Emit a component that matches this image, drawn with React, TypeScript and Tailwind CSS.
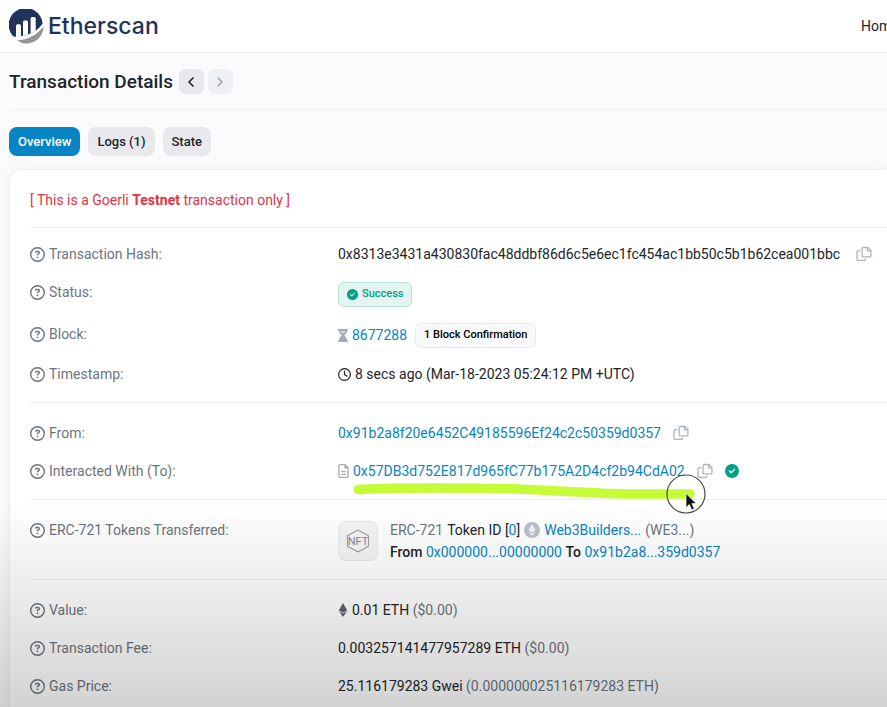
import type { ReactNode } from "react";
import {
  FaRegCircleQuestion,
  FaCircleCheck,
  FaRegClock,
  FaRegFileLines,
  FaEthereum,
} from "react-icons/fa6";
import { ChevronLeft, ChevronRight } from "lucide-react";

function Logo() {
  return (
    <svg className="size-[35px] shrink-0" viewBox="0 0 35 35" aria-hidden="true">
      <path
        d="M3.6 26.8A17 17 0 1 1 33.6 14.5C31 18.6 27.500 21.300 24 23.300C18.500 26.200 11.500 27.600 7.300 27.700Q5 27.900 3.600 26.800Z"
        fill="#21325b"
      />
      <path
        d="M7 16.800Q7 15.300 8.500 15.300H10.600Q12 15.300 12 16.800V27.200Q9.600 27.700 7 28ZM14 13Q14 11.500 15.500 11.500H17.600Q19 11.500 19 13V25.600Q16.800 26.500 14 27.100ZM21.600 9.400Q21.600 7.900 23.100 7.900H25.200Q26.700 7.900 26.700 9.400V21.700Q24.800 23.200 21.600 24.600Z"
        fill="#fff"
      />
      <path d="M8 31.600C18 31 28 26.400 34.500 17.600A17 17 0 0 1 8 31.600Z" fill="#979695" />
    </svg>
  );
}

function CopyButton() {
  return (
    <button type="button" aria-label="Copy" className="shrink-0 text-[#adb5bd]">
      <svg
        className="size-4"
        viewBox="0 0 16 16"
        fill="none"
        stroke="currentColor"
        strokeWidth="1.300"
        strokeLinejoin="round"
      >
        <path d="M7.300 1.500H12l2.900 2.900V9.700a1.200 1.200 0 0 1-1.200 1.200H7.300a1.200 1.200 0 0 1-1.200-1.200V2.700a1.200 1.200 0 0 1 1.200-1.200Z" />
        <path d="M11.500 1.700V4.900h3.200" />
        <path d="M4.300 4.700H2.200A1.200 1.200 0 0 0 1 5.900v7.200a1.200 1.200 0 0 0 1.200 1.200h6.300a1.200 1.200 0 0 0 1.200-1.200v-.5" />
      </svg>
    </button>
  );
}

function Hourglass() {
  return (
    <svg className="h-[13px] w-2.5 shrink-0" viewBox="0 0 10 13" fill="#a5abb1" aria-hidden="true">
      <path d="M0 0h10v1.500H0ZM0 11.500h10V13H0Z" />
      <path d="M1 1h8v1.200C9 4.200 7.200 5.400 6.100 6.500 7.200 7.600 9 8.800 9 10.800V12H1v-1.200C1 8.800 2.800 7.600 3.900 6.500 2.800 5.400 1 4.200 1 2.200Z" />
      <path d="M2.300 2.200h5.400L6.800 4H3.200Z" fill="#d9dcdf" />
    </svg>
  );
}

function NftIcon() {
  return (
    <span className="flex size-10 shrink-0 items-center justify-center rounded-lg border border-[#e6e8ea] bg-[#f4f4f6]">
      <svg className="size-6" viewBox="0 0 24 24" aria-hidden="true">
        <path
          d="M1.500 6.800 12 1l10.500 5.800V17.200L12 23 1.500 17.200Z"
          fill="none"
          stroke="#9a9fa5"
          strokeWidth="1.100"
          strokeLinejoin="round"
        />
        <text
          x="12"
          y="16"
          textAnchor="middle"
          className="fill-[#858a91] font-['Roboto'] text-[11px] font-normal"
        >
          NFT
        </text>
      </svg>
    </span>
  );
}

function TokenIcon() {
  return (
    <svg className="size-4 shrink-0" viewBox="0 0 16 16" aria-hidden="true">
      <circle cx="8" cy="8" r="8" fill="#b9c0cc" />
      <path d="M8 2.200 11.500 8.200 8 10.300 4.500 8.200ZM4.500 9.300 8 11.400l3.500-2.100L8 14Z" fill="#f5f6f8" />
    </svg>
  );
}

function Marker() {
  return (
    <svg
      className="pointer-events-none absolute top-0 left-0 h-15 w-[372px]"
      viewBox="0 0 372 60"
      aria-hidden="true"
    >
      <path
        d="M20 30.500C80 28 130 29 180 30C230 32 260 35 300 35L352 35"
        fill="none"
        stroke="#c6fb38"
        strokeWidth="9.500"
        strokeLinecap="round"
        strokeLinejoin="round"
      />
      <circle cx="348" cy="35" r="19" fill="none" stroke="#4a4a4a" strokeWidth="1.200" />
      <path
        d="M348 34.500V48.500L351.300 45.500L353.800 51L356.300 49.800L353.900 44.600H358.300Z"
        fill="#111"
        stroke="#fff"
        strokeWidth=".7"
      />
    </svg>
  );
}

function Row({ label, children }: { label: string; children: ReactNode }) {
  return (
    <div className="grid grid-cols-[308px_1fr]">
      <dt className="flex h-6 items-center gap-1 text-[#6c757d]">
        <FaRegCircleQuestion className="size-[15px] shrink-0" aria-hidden="true" />
        {label}
      </dt>
      <dd className="min-w-0 whitespace-nowrap">{children}</dd>
    </div>
  );
}

function Group({ children }: { children: ReactNode }) {
  return (
    <dl className="flex flex-col gap-3.5 border-b border-[#eceef0] pt-[18px] pb-4 first-of-type:pt-3.5 last:border-b-0">
      {children}
    </dl>
  );
}

function Link({ children }: { children: ReactNode }) {
  return (
    <a href="#" className="text-[#0784c3]">
      {children}
    </a>
  );
}

const tab = "h-[29px] rounded-lg px-[9px] text-[13px] font-medium";

export default function App() {
  return (
    <div className="relative flex min-h-screen flex-col overflow-hidden bg-[#fbfbfd] font-['Roboto','Liberation_Sans',sans-serif] text-[14px] leading-6 font-[450] text-[#212529]">
      <header className="flex h-[53px] items-center justify-between border-b border-[#eeeff1] bg-white pl-[9px]">
        <a href="#" className="flex items-center gap-1 text-[#21325b]">
          <Logo />
          <span className="font-['Inter','Liberation_Sans',sans-serif] text-[23px] leading-8 font-medium">
            Etherscan
          </span>
        </a>
        <nav className="w-[26px] whitespace-nowrap">
          <a href="#">Home</a>
        </nav>
      </header>

      <main className="flex flex-1 flex-col">
        <div className="ml-[9px] flex h-[58px] items-center gap-1.5 border-b border-[#f1f2f4]">
          <h1 className="text-[19px] font-medium">Transaction Details</h1>
          <div className="flex gap-1">
            <button
              type="button"
              aria-label="Previous transaction"
              className="flex size-[25px] items-center justify-center rounded-md bg-[#e9e9ed]"
            >
              <ChevronLeft size={16} strokeWidth={2.5} />
            </button>
            <button
              type="button"
              aria-label="Next transaction"
              className="flex size-[25px] items-center justify-center rounded-md bg-[#eff0f3] text-[#9a9fa5]"
            >
              <ChevronRight size={16} strokeWidth={2} />
            </button>
          </div>
        </div>

        <div className="flex gap-2 pt-4 pb-[13px] pl-[9px]">
          <button type="button" className={`${tab} bg-[#0784c3] text-white`}>
            Overview
          </button>
          <button type="button" className={`${tab} bg-[#e9e9ed]`}>
            Logs (1)
          </button>
          <button type="button" className={`${tab} bg-[#e9e9ed]`}>
            State
          </button>
        </div>

        <section className="ml-[9px] flex-1 rounded-tl-xl border-t border-l border-[#eceef1] bg-white pl-5 shadow-[0_0_8px_rgba(189,197,209,0.2)]">
          <p className="border-b border-[#eceef0] pt-[18px] pb-[15px] text-[#dc3545]">
            [ This is a Goerli <strong className="font-bold">Testnet</strong> transaction only ]
          </p>

          <Group>
            <Row label="Transaction Hash:">
              <div className="flex items-center gap-4">
                0x8313e3431a430830fac48ddbf86d6c5e6ec1fc454ac1bb50c5b1b62cea001bbc
                <CopyButton />
              </div>
            </Row>
            <Row label="Status:">
              <div className="flex h-7 items-center">
                <span className="flex h-[25px] items-center gap-1 rounded-md border border-[#b5e0d6] bg-[#e4f5f1] px-2 text-[11px] font-medium text-[#00a186]">
                  <FaCircleCheck className="size-[11px]" aria-hidden="true" />
                  Success
                </span>
              </div>
            </Row>
            <Row label="Block:">
              <div className="flex h-[26px] items-center gap-1">
                <Hourglass />
                <Link>8677288</Link>
                <span className="ml-1 flex h-[25px] items-center rounded-md border border-[#e9ecef] bg-[#f8f9fa] px-2 text-[11px] font-medium text-black">
                  1 Block Confirmation
                </span>
              </div>
            </Row>
            <Row label="Timestamp:">
              <div className="flex items-center gap-1">
                <FaRegClock className="size-[13px]" aria-hidden="true" />
                8 secs ago (Mar-18-2023 05:24:12 PM +UTC)
              </div>
            </Row>
          </Group>

          <Group>
            <Row label="From:">
              <div className="flex items-center gap-3">
                <Link>0x91b2a8f20e6452C49185596Ef24c2c50359d0357</Link>
                <CopyButton />
              </div>
            </Row>
            <Row label="Interacted With (To):">
              <div className="relative flex items-center gap-3">
                <span className="flex items-center gap-1">
                  <FaRegFileLines className="h-3.5 w-[11px] text-[#a5abb1]" aria-hidden="true" />
                  <Link>0x57DB3d752E817d965fC77b175A2D4cf2b94CdA02</Link>
                </span>
                <CopyButton />
                <FaCircleCheck className="size-3.5 text-[#00a186]" aria-hidden="true" />
                <Marker />
              </div>
            </Row>
          </Group>

          <Group>
            <Row label="ERC-721 Tokens Transferred:">
              <div className="flex h-[45px] items-center gap-3 leading-[22px]">
                <NftIcon />
                <div>
                  <div className="flex items-center gap-1">
                    <span className="text-[#6c757d]">ERC-721</span>
                    <span>
                      Token ID [<Link>0</Link>]
                    </span>
                    <TokenIcon />
                    <Link>Web3Builders...</Link>
                    <span className="text-[#6c757d]">(WE3...)</span>
                  </div>
                  <div>
                    <span className="font-medium">From</span> <Link>0x000000...00000000</Link>{" "}
                    <span className="font-medium">To</span> <Link>0x91b2a8...359d0357</Link>
                  </div>
                </div>
              </div>
            </Row>
          </Group>

          <Group>
            <Row label="Value:">
              <div className="flex items-center gap-1">
                <FaEthereum className="h-3.5 w-2.5 text-[#5b6168]" aria-hidden="true" />
                <span>
                  0.01 ETH <span className="text-[#6c757d]">($0.00)</span>
                </span>
              </div>
            </Row>
            <Row label="Transaction Fee:">
              0.003257141477957289 ETH <span className="text-[#6c757d]">($0.00)</span>
            </Row>
            <Row label="Gas Price:">
              25.116179283 Gwei <span className="text-[#6c757d]">(0.000000025116179283 ETH)</span>
            </Row>
          </Group>
        </section>
      </main>

      <div className="pointer-events-none absolute inset-x-0 bottom-0 h-[212px] bg-linear-to-b from-black/0 to-black/18" />
    </div>
  );
}
